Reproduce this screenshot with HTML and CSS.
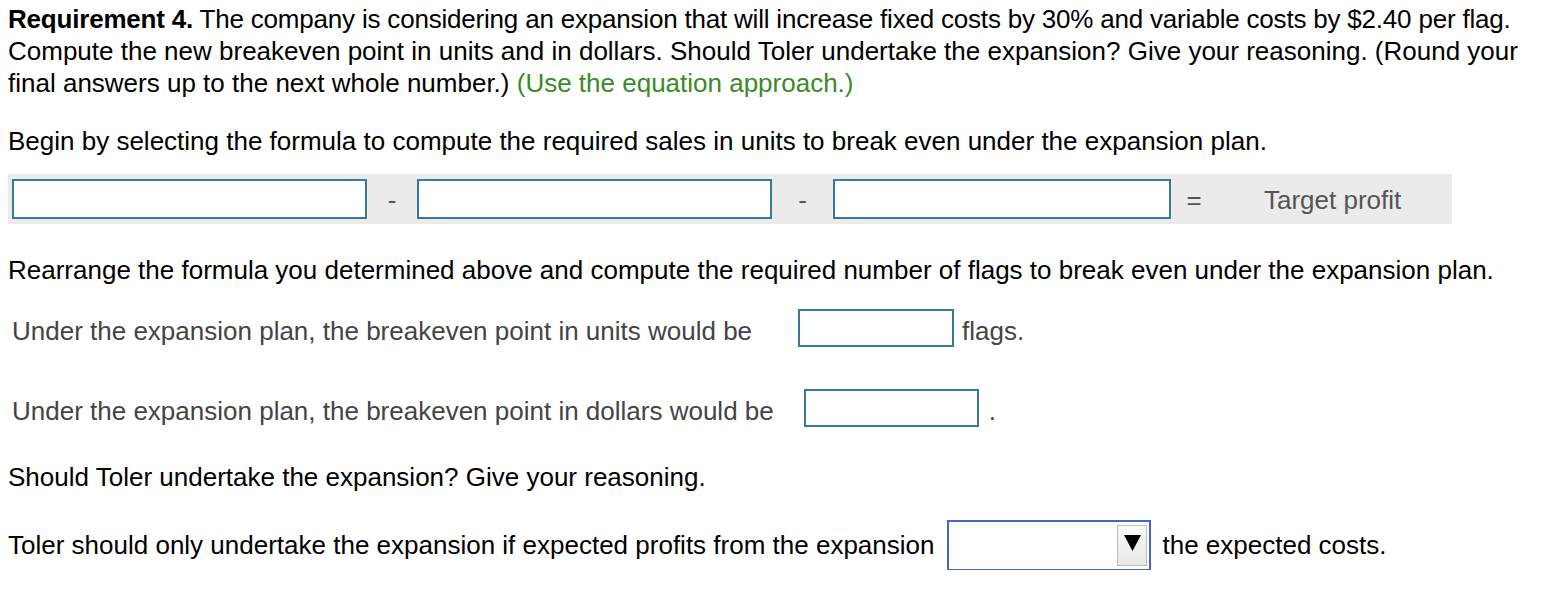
FILE: index.html
```html
<!DOCTYPE html>
<html>
<head>
<meta charset="utf-8">
<link rel="stylesheet" href="styles.css">
</head>
<body>
<div class="page">
  <p class="intro"><span class="tight"><b>Requirement 4.</b> The company is considering an expansion that will increase fixed costs by 30% and variable costs by $2.40 per flag.</span><br>Compute the new breakeven point in units and in dollars. Should Toler undertake the expansion? Give your reasoning. (Round your<br>final answers up to the next whole number.) <span class="hint">(Use the equation approach.)</span></p>

  <p class="line begin">Begin by selecting the formula to compute the required sales in units to break even under the expansion plan.</p>

  <div class="formula">
    <span class="box b1"></span>
    <span class="op op1">-</span>
    <span class="box b2"></span>
    <span class="op op2">-</span>
    <span class="box b3"></span>
    <span class="op op3">=</span>
    <span class="target">Target profit</span>
  </div>

  <p class="line rearrange">Rearrange the formula you determined above and compute the required number of flags to break even under the expansion plan.</p>

  <div class="answer units">
    <span class="label">Under the expansion plan, the breakeven point in units would be</span>
    <span class="box a1"></span>
    <span class="after">flags.</span>
  </div>

  <div class="answer dollars">
    <span class="label">Under the expansion plan, the breakeven point in dollars would be</span>
    <span class="box a2"></span>
    <span class="after dot">.</span>
  </div>

  <p class="line should">Should Toler undertake the expansion? Give your reasoning.</p>

  <div class="final">
    <span>Toler should only undertake the expansion if expected profits from the expansion</span>
    <span class="select"><span class="arrow"><svg width="17" height="17" viewBox="0 0 16 16"><polygon points="0,1 16,1 8,16" fill="#000"/></svg></span></span>
    <span>the expected costs.</span>
  </div>
</div>
</body>
</html>
```
FILE: styles.css
```css
html, body { margin: 0; padding: 0; background: #fff; }
body {
  font-family: "Liberation Sans", Arial, sans-serif;
  font-size: 26px;
  color: #000;
}
.page { padding: 3px 0 0 8px; width: 1530px; }
p { margin: 0; }
.intro { line-height: 32px; width: 1535px; white-space: nowrap; }
.tight { letter-spacing: -0.2px; }
.hint { color: #3b8a28; }
.line { line-height: 32px; }
.begin { margin-top: 26px; }

.formula {
  margin-top: 17px;
  width: 1444px;
  height: 50px;
  background: #ebebeb;
  display: flex;
  align-items: center;
  box-sizing: border-box;
  padding: 0 4px;
  color: #555;
}
.box {
  display: inline-block;
  box-sizing: border-box;
  border: 2px solid #3a7898;
  background: #fff;
  height: 40px;
}
.b1 { width: 355px; }
.b2 { width: 355px; }
.b3 { width: 338px; }
.op { text-align: center; padding-top: 3px; }
.op1 { width: 50px; }
.op2 { width: 61px; }
.op3 { width: 46px; }
.target { margin-left: 47px; padding-top: 3px; }

.rearrange { margin-top: 30px; }

.answer {
  display: flex;
  align-items: center;
  padding-left: 4px;
  color: #444;
}
.answer .label, .answer .after { line-height: 32px; padding-top: 5px; }
.units { margin-top: 23px; height: 38px; }
.units .a1 { width: 156px; height: 38px; margin-left: 46px; }
.units .after { margin-left: 8px; }
.dollars { margin-top: 42px; height: 38px; }
.dollars .a2 { width: 175px; height: 38px; margin-left: 30px; }
.dollars .after { margin-left: 10px; }

.should { margin-top: 34px; }

.final {
  margin-top: 27px;
  display: flex;
  align-items: center;
  height: 50px;
}
.select {
  box-sizing: border-box;
  width: 204px;
  height: 51px;
  border: 2px solid #4466c4;
  margin: 0 11px 0 13px;
  display: flex;
  justify-content: flex-end;
  align-items: center;
  padding-right: 2px;
}
.arrow {
  box-sizing: border-box;
  width: 30px;
  height: 41px;
  background: linear-gradient(#fafafa, #e6e6e6);
  border: 1px solid #bcbcbc;
  display: flex;
  justify-content: center;
  align-items: flex-start;
  padding-top: 8px;
}
.arrow svg { display: block; }
```
